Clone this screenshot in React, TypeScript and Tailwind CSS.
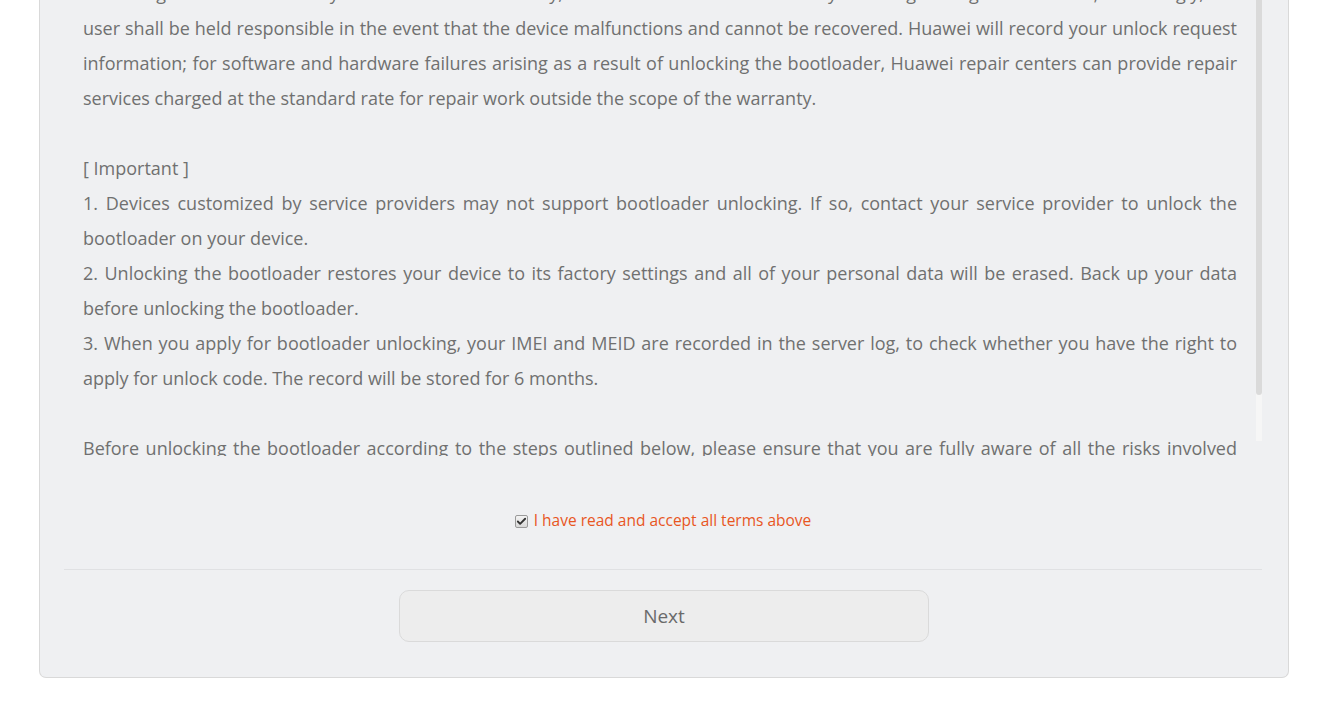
import { Check } from "lucide-react"

type Block = { lines: string[]; gapBefore?: boolean }

// each visual line is kept as in the original terms page
const terms: Block[] = [
  {
    lines: [
      "Unlocking the bootloader may result in device instability, and Huawei is not liable for any resulting damage or data loss; accordingly, the",
      "user shall be held responsible in the event that the device malfunctions and cannot be recovered. Huawei will record your unlock request",
      "information; for software and hardware failures arising as a result of unlocking the bootloader, Huawei repair centers can provide repair",
      "services charged at the standard rate for repair work outside the scope of the warranty.",
    ],
  },
  { lines: ["[ Important ]"], gapBefore: true },
  {
    lines: [
      "1. Devices customized by service providers may not support bootloader unlocking. If so, contact your service provider to unlock the",
      "bootloader on your device.",
    ],
  },
  {
    lines: [
      "2. Unlocking the bootloader restores your device to its factory settings and all of your personal data will be erased. Back up your data",
      "before unlocking the bootloader.",
    ],
  },
  {
    lines: [
      "3. When you apply for bootloader unlocking, your IMEI and MEID are recorded in the server log, to check whether you have the right to",
      "apply for unlock code. The record will be stored for 6 months.",
    ],
  },
  {
    lines: [
      "Before unlocking the bootloader according to the steps outlined below, please ensure that you are fully aware of all the risks involved",
      "",
    ],
    gapBefore: true,
  },
]

function TermsText() {
  return (
    <div className="-mt-[24px] text-[18px] leading-[35px] text-[#707070]">
      {terms.map((block, i) => (
        <p key={i} className={block.gapBefore ? "mt-[35px]" : ""}>
          {block.lines.map((line, j) => (
            <span
              key={j}
              className={
                j < block.lines.length - 1
                  ? "block whitespace-nowrap text-justify [text-align-last:justify]"
                  : "block whitespace-nowrap"
              }
            >
              {line}
            </span>
          ))}
        </p>
      ))}
    </div>
  )
}

export default function App() {
  return (
    <div
      className="min-h-[701px] bg-white"
      style={{ fontFamily: '"Open Sans", "Noto Sans", sans-serif' }}
    >
      <div className="ml-[39px] w-[1250px] rounded-b-[7px] border-x border-b border-[#d9d9d9] bg-[#eff0f2] pl-6 pr-[26px] pb-[35px]">
        <div className="flex h-[456px] overflow-hidden">
          <div className="min-w-0 flex-1 pl-[19px] pr-[19px]">
            <TermsText />
          </div>
          <div className="mb-[15px] flex w-[6px] flex-col bg-[#f6f6f6]">
            <div className="h-[395px] rounded-b-[3px] bg-[#dadada]" />
          </div>
        </div>

        <label className="mt-[53px] flex h-6 items-center justify-center gap-[6px] text-[15.5px] text-[#e8561f]">
          <span className="flex size-[13px] items-center justify-center rounded-[2px] border border-[#9a9a9a] bg-gradient-to-b from-[#f4f4f4] to-[#d8d8d8]">
            <Check className="size-[11px] text-[#333]" strokeWidth={4} />
          </span>
          I have read and accept all terms above
        </label>

        <div className="mt-[36px] border-t border-[#e0e1e3] pt-5">
          <button className="ml-[335px] flex h-[52px] w-[530px] items-center justify-center rounded-[10px] border border-[#dadada] bg-[#ededed] text-[19px] text-[#6a6a6a]">
            Next
          </button>
        </div>
      </div>
    </div>
  )
}
